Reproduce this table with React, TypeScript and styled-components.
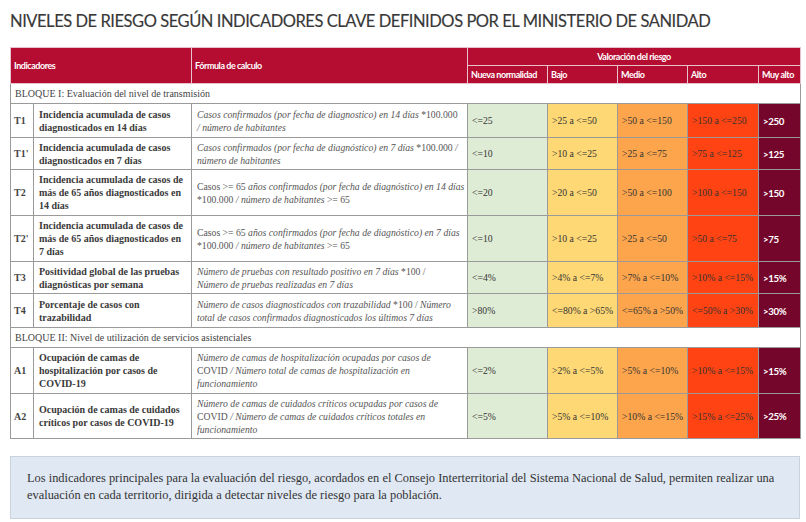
import React from "react";
import styled, { createGlobalStyle } from "styled-components";

const Global = createGlobalStyle`
  html, body { margin: 0; padding: 0; background: #fff; }
  body { font-family: "Liberation Serif", serif; color: #333; }
`;

const Page = styled.div`
  width: 806px;
  height: 522px;
  padding: 11px 6px 0 10px;
  box-sizing: border-box;
  overflow: hidden;
`;

const Title = styled.h1`
  margin: 0 0 16px 0;
  font-family: Lato, "Open Sans", sans-serif;
  font-weight: 400;
  font-size: 16.5px;
  line-height: 20px;
  letter-spacing: -0.45px;
  color: #383838;
  white-space: nowrap;
  -webkit-text-stroke: 0.15px #383838;
`;

const Table = styled.table`
  width: 790px;
  table-layout: fixed;
  border-collapse: collapse;
  border: 1px solid #9a9a9a;
`;

const HeadCell = styled.th<{ $center?: boolean }>`
  background: #b50d31;
  color: #fff;
  font-family: Lato, "Open Sans", sans-serif;
  font-weight: 700;
  font-size: 9px;
  letter-spacing: -0.45px;
  text-align: ${(p) => (p.$center ? "center" : "left")};
  vertical-align: middle;
  padding: 0 3px;
  border: 1px solid #e7c2ca;
  height: 17px;
  white-space: nowrap;
`;

const Row = styled.tr<{ $h: number }>`
  height: ${(p) => p.$h}px;
`;

const BlockCell = styled.td`
  background: #fff;
  border: 1px solid #9a9a9a;
  font-size: 10px;
  color: #444;
  padding: 0 4px;
  height: 19px;
`;

const CodeCell = styled.td`
  border: 1px solid #9a9a9a;
  font-weight: 700;
  font-size: 10px;
  color: #444;
  padding: 0 3px;
  vertical-align: middle;
`;

const NameCell = styled.td`
  border: 1px solid #9a9a9a;
  font-weight: 700;
  font-size: 10px;
  line-height: 13px;
  color: #3a3a3a;
  padding: 2px 5px;
  vertical-align: middle;
`;

const FormulaCell = styled.td`
  border: 1px solid #9a9a9a;
  font-style: italic;
  font-size: 9.7px;
  line-height: 13px;
  color: #555;
  padding: 2px 5px;
  vertical-align: middle;
  white-space: nowrap;
  overflow: hidden;
`;

const Line = styled.span`
  display: block;
`;

const Up = styled.span`
  font-style: normal;
`;

const levelBg: Record<string, string> = {
  n: "#dfecd5",
  b: "#fdd875",
  m: "#fca54c",
  a: "#ff4312",
  x: "#75062b",
};

const ValueCell = styled.td<{ $lvl: string }>`
  border: 1px solid #9a9a9a;
  background: ${(p) => levelBg[p.$lvl]};
  font-size: 9.7px;
  color: ${(p) => (p.$lvl === "x" ? "#fff" : "#333")};
  font-family: ${(p) =>
    p.$lvl === "x" ? 'Lato, "Open Sans", sans-serif' : '"Liberation Serif", serif'};
  font-weight: ${(p) => (p.$lvl === "x" ? 700 : 400)};
  letter-spacing: ${(p) => (p.$lvl === "x" ? "-0.4px" : "0")};
  padding: 0 4px;
  vertical-align: middle;
  white-space: nowrap;
`;

const Note = styled.div`
  margin-top: 17px;
  width: 790px;
  box-sizing: border-box;
  background: #dfe8f3;
  border: 1px solid #c9d3de;
  padding: 13px 16px 14px 16px;
  font-family: "Liberation Serif", serif;
  font-size: 12.4px;
  line-height: 17px;
  color: #333;
`;

type Ind = {
  code: string;
  name: string;
  formula: React.ReactNode[];
  vals: [string, string, string, string, string];
  h: number;
};

const block1: Ind[] = [
  {
    code: "T1",
    name: "Incidencia acumulada de casos diagnosticados en 14 días",
    formula: [
      <>
        Casos confirmados (por fecha de diagnostico) en 14 días <Up>*100.000</Up>
      </>,
      <>/ número de habitantes</>,
    ],
    vals: ["<=25", ">25 a <=50", ">50 a <=150", ">150 a <=250", ">250"],
    h: 34,
  },
  {
    code: "T1'",
    name: "Incidencia acumulada de casos diagnosticados en 7 días",
    formula: [
      <>
        Casos confirmados (por fecha de diagnóstico) en 7 días <Up>*100.000</Up> /
      </>,
      <>número de habitantes</>,
    ],
    vals: ["<=10", ">10 a <=25", ">25 a <=75", ">75 a <=125", ">125"],
    h: 32,
  },
  {
    code: "T2",
    name: "Incidencia acumulada de casos de más de 65 años diagnosticados en 14 días",
    formula: [
      <>
        <Up>Casos &gt;= 65</Up> años confirmados (por fecha de diagnóstico) en 14 días
      </>,
      <>
        <Up>*100.000</Up> / número de habitantes <Up>&gt;= 65</Up>
      </>,
    ],
    vals: ["<=20", ">20 a <=50", ">50 a <=100", ">100 a <=150", ">150"],
    h: 46,
  },
  {
    code: "T2'",
    name: "Incidencia acumulada de casos de más de 65 años diagnosticados en 7 días",
    formula: [
      <>
        <Up>Casos &gt;= 65</Up> años confirmados (por fecha de diagnóstico) en 7 días
      </>,
      <>
        <Up>*100.000</Up> / número de habitantes <Up>&gt;= 65</Up>
      </>,
    ],
    vals: ["<=10", ">10 a <=25", ">25 a <=50", ">50 a <=75", ">75"],
    h: 46,
  },
  {
    code: "T3",
    name: "Positividad global de las pruebas diagnósticas por semana",
    formula: [
      <>
        Número de pruebas con resultado positivo en 7 días <Up>*100 /</Up>
      </>,
      <>Número de pruebas realizadas en 7 días</>,
    ],
    vals: ["<=4%", ">4% a <=7%", ">7% a <=10%", ">10% a <=15%", ">15%"],
    h: 32,
  },
  {
    code: "T4",
    name: "Porcentaje de casos con trazabilidad",
    formula: [
      <>
        Número de casos diagnosticados con trazabilidad <Up>*100 /</Up> Número
      </>,
      <>total de casos confirmados diagnosticados los últimos 7 días</>,
    ],
    vals: [">80%", "<=80% a >65%", "<=65% a >50%", "<=50% a >30%", ">30%"],
    h: 34,
  },
];

const block2: Ind[] = [
  {
    code: "A1",
    name: "Ocupación de camas de hospitalización por casos de COVID-19",
    formula: [
      <>Número de camas de hospitalización ocupadas por casos de</>,
      <>
        <Up>COVID</Up> / Número total de camas de hospitalización en
      </>,
      <>funcionamiento</>,
    ],
    vals: ["<=2%", ">2% a <=5%", ">5% a <=10%", ">10% a <=15%", ">15%"],
    h: 46,
  },
  {
    code: "A2",
    name: "Ocupación de camas de cuidados críticos por casos de COVID-19",
    formula: [
      <>Número de camas de cuidados críticos ocupadas por casos de</>,
      <>
        <Up>COVID</Up> / Número de camas de cuidados críticos totales en
      </>,
      <>funcionamiento</>,
    ],
    vals: ["<=5%", ">5% a <=10%", ">10% a <=15%", ">15% a <=25%", ">25%"],
    h: 45,
  },
];

const lvls = ["n", "b", "m", "a", "x"];

const IndRow = ({ d }: { d: Ind }) => (
  <Row $h={d.h}>
    <CodeCell>{d.code}</CodeCell>
    <NameCell>{d.name}</NameCell>
    <FormulaCell>
      {d.formula.map((l, i) => (
        <Line key={i}>{l}</Line>
      ))}
    </FormulaCell>
    {d.vals.map((v, i) => (
      <ValueCell key={i} $lvl={lvls[i]}>
        {v}
      </ValueCell>
    ))}
  </Row>
);

export default function App() {
  return (
    <Page>
      <Global />
      <Title>NIVELES DE RIESGO SEGÚN INDICADORES CLAVE DEFINIDOS POR EL MINISTERIO DE SANIDAD</Title>
      <Table>
        <colgroup>
          <col style={{ width: 23 }} />
          <col style={{ width: 158 }} />
          <col style={{ width: 276 }} />
          <col style={{ width: 80 }} />
          <col style={{ width: 70 }} />
          <col style={{ width: 70 }} />
          <col style={{ width: 71 }} />
          <col style={{ width: 42 }} />
        </colgroup>
        <thead>
          <tr>
            <HeadCell colSpan={2} rowSpan={2}>
              Indicadores
            </HeadCell>
            <HeadCell rowSpan={2}>Fórmula de calculo</HeadCell>
            <HeadCell colSpan={5} $center>
              Valoración del riesgo
            </HeadCell>
          </tr>
          <tr>
            <HeadCell>Nueva normalidad</HeadCell>
            <HeadCell>Bajo</HeadCell>
            <HeadCell>Medio</HeadCell>
            <HeadCell>Alto</HeadCell>
            <HeadCell>Muy alto</HeadCell>
          </tr>
        </thead>
        <tbody>
          <tr>
            <BlockCell colSpan={8}>BLOQUE I: Evaluación del nivel de transmisión</BlockCell>
          </tr>
          {block1.map((d) => (
            <IndRow key={d.code} d={d} />
          ))}
          <tr>
            <BlockCell colSpan={8}>BLOQUE II: Nivel de utilización de servicios asistenciales</BlockCell>
          </tr>
          {block2.map((d) => (
            <IndRow key={d.code} d={d} />
          ))}
        </tbody>
      </Table>
      <Note>
        Los indicadores principales para la evaluación del riesgo, acordados en el Consejo Interterritorial del
        Sistema Nacional de Salud, permiten realizar una evaluación en cada territorio, dirigida a detectar niveles
        de riesgo para la población.
      </Note>
    </Page>
  );
}
